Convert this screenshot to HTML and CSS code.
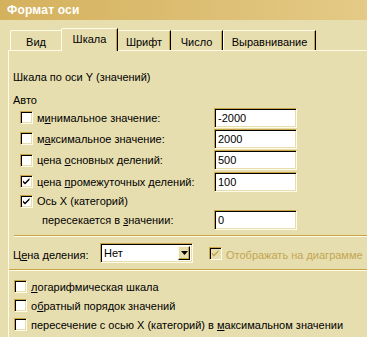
FILE: index.html
```html
<!DOCTYPE html>
<html lang="ru">
<head>
<meta charset="utf-8">
<title>Формат оси</title>
<link rel="stylesheet" href="styles.css">
</head>
<body>
<div class="dialog">
  <div class="titlebar">Формат оси</div>
  <div class="tabs">
    <div class="tab t-vid">Вид</div>
    <div class="tab t-scale active">Шкала</div>
    <div class="tab t-font">Шрифт</div>
    <div class="tab t-num">Число</div>
    <div class="tab t-align">Выравнивание</div>
  </div>
  <div class="panel">
    <div class="heading">Шкала по оси Y (значений)</div>
    <div class="auto">Авто</div>

    <div class="row r1">
      <div class="lbl"><span class="cb"></span><span>м<u>и</u>нимальное значение:</span></div>
      <div class="field">-2000</div>
    </div>
    <div class="row r2">
      <div class="lbl"><span class="cb"></span><span>м<u>а</u>ксимальное значение:</span></div>
      <div class="field">2000</div>
    </div>
    <div class="row r3">
      <div class="lbl"><span class="cb"></span><span>цена <u>о</u>сновных делений:</span></div>
      <div class="field">500</div>
    </div>
    <div class="row r4">
      <div class="lbl"><span class="cb checked"><svg viewBox="0 0 13 13" width="13" height="13"><path d="M3 5.5 L5 7.5 L9.5 3 L9.5 5 L5 9.5 L3 7.5 Z" fill="#000"/></svg></span><span>цена <u>п</u>ромежуточных делений:</span></div>
      <div class="field">100</div>
    </div>
    <div class="row r5">
      <div class="lbl"><span class="cb checked"><svg viewBox="0 0 13 13" width="13" height="13"><path d="M3 5.5 L5 7.5 L9.5 3 L9.5 5 L5 9.5 L3 7.5 Z" fill="#000"/></svg></span><span>Ось X (категорий)</span></div>
    </div>
    <div class="row r6">
      <div class="lbl indent"><span>пересекается в <u>з</u>начении:</span></div>
      <div class="field">0</div>
    </div>

    <div class="sep sep1"></div>

    <div class="row unit">
      <span class="unit-lbl">Ц<u>е</u>на деления:</span>
      <div class="combo"><span class="combo-val">Нет</span><span class="combo-btn"><svg viewBox="0 0 7 4" width="7" height="4"><path d="M0 0 H7 L3.5 4 Z" fill="#000"/></svg></span></div>
      <span class="cb disabled"><svg viewBox="0 0 13 13" width="13" height="13"><path d="M3 5.5 L5 7.5 L9.5 3 L9.5 5 L5 9.5 L3 7.5 Z" fill="#c2a653"/></svg></span>
      <span class="dis-text">Отображать на диаграмме</span>
    </div>

    <div class="sep sep2"></div>

    <div class="brow first"><span class="cb"></span><span><u>л</u>огарифмическая шкала</span></div>
    <div class="brow"><span class="cb"></span><span>о<u>б</u>ратный порядок значений</span></div>
    <div class="brow"><span class="cb"></span><span>пересечение с осью X (категорий) в <u>м</u>аксимальном значении</span></div>
  </div>
</div>
</body>
</html>
```
FILE: styles.css
```css
html, body {
  margin: 0;
  padding: 0;
}
body {
  background: #e7deaf;
  font-family: "Liberation Sans", Arial, sans-serif;
  font-size: 11px;
  color: #000;
  width: 367px;
  height: 337px;
  overflow: hidden;
  white-space: nowrap;
}
.dialog {
  display: flex;
  flex-direction: column;
}
.titlebar {
  height: 20px;
  line-height: 20px;
  padding-left: 7px;
  background: linear-gradient(to right, #d4b15d, #e4ca86);
  color: #fff;
  font-weight: bold;
  font-size: 12px;
  letter-spacing: 0.2px;
}
.tabs {
  display: flex;
  align-items: flex-end;
  height: 22px;
  margin-top: 8px;
  padding-left: 10px;
  position: relative;
  z-index: 1;
}
.tab {
  box-sizing: border-box;
  height: 20px;
  display: flex;
  align-items: center;
  justify-content: center;
  padding-top: 2px;
  border-top: 1px solid #fffbe6;
  border-left: 1px solid #fffbe6;
  border-right: 1px solid #000;
  box-shadow: inset -1px 0 0 #c9a445;
  border-top-left-radius: 2px;
  background: #e7deaf;
}
.t-vid { width: 51px; border-right: none; box-shadow: none; }
.t-scale { width: 57px; }
.t-font { width: 53px; border-left: none; }
.t-num { width: 52px; border-left: none; }
.t-align { width: 93px; }
.tab.active {
  height: 23px;
  margin-bottom: -1px;
  padding-top: 0;
  padding-bottom: 3px;
}
.panel {
  margin-left: 8px;
  border-left: 1px solid #fffbe6;
  border-top: 1px solid #fffbe6;
  height: 290px;
  display: flex;
  flex-direction: column;
}
.heading {
  margin-top: 20px;
  padding-left: 4px;
  line-height: 13px;
  height: 13px;
}
.auto {
  margin-top: 10px;
  padding-left: 4px;
  line-height: 13px;
  height: 13px;
}
.row {
  display: flex;
  align-items: center;
}
.r1 { height: 21px; }
.r2 { height: 21px; }
.r3 { height: 22px; }
.r4 { height: 21px; }
.r5 { height: 18px; }
.r6 { height: 20px; }
.lbl {
  box-sizing: border-box;
  width: 205px;
  padding-left: 11px;
  display: flex;
  align-items: center;
  gap: 4px;
}
.lbl.indent { padding-left: 33px; }
.cb {
  box-sizing: border-box;
  width: 13px;
  height: 13px;
  flex: none;
  background: #fff;
  border-top: 1px solid #c9a445;
  border-left: 1px solid #c9a445;
  border-bottom: 1px solid #fffbe6;
  border-right: 1px solid #fffbe6;
  box-shadow: inset 1px 1px 0 #000, inset -1px -1px 0 #e7deaf;
  position: relative;
}
.cb svg {
  position: absolute;
  left: -1px;
  top: -1px;
}
.field {
  box-sizing: border-box;
  width: 83px;
  height: 20px;
  background: #fff;
  border-top: 1px solid #c9a445;
  border-left: 1px solid #c9a445;
  border-bottom: 1px solid #fffbe6;
  border-right: 1px solid #fffbe6;
  box-shadow: inset 1px 1px 0 #000, inset -1px -1px 0 #e7deaf;
  padding-left: 3px;
  line-height: 18px;
}
.sep {
  height: 1px;
  background: #c9a445;
  border-bottom: 1px solid #fffbe6;
}
.sep1 { margin-top: 5px; margin-left: 5px; }
.sep2 { margin-top: 6px; }
.unit {
  margin-top: 6px;
  height: 20px;
  padding-left: 4px;
}
.unit-lbl {
  width: 87px;
  padding-top: 3px;
}
.combo {
  box-sizing: border-box;
  width: 93px;
  height: 20px;
  background: #fff;
  border-top: 1px solid #c9a445;
  border-left: 1px solid #c9a445;
  border-bottom: 1px solid #fffbe6;
  border-right: 1px solid #fffbe6;
  box-shadow: inset 1px 1px 0 #000, inset -1px -1px 0 #e7deaf;
  display: flex;
  align-items: stretch;
  padding: 2px;
}
.combo-val {
  flex: 1;
  padding-left: 1px;
  line-height: 14px;
}
.combo-btn {
  box-sizing: border-box;
  width: 12px;
  background: #e7deaf;
  border-top: 1px solid #fffbe6;
  border-left: 1px solid #fffbe6;
  border-right: 1px solid #000;
  border-bottom: 1px solid #000;
  box-shadow: inset -1px -1px 0 #c9a445;
  display: flex;
  align-items: center;
  justify-content: center;
}
.cb.disabled {
  margin-left: 16px;
  background: #e7deaf;
}
.dis-text {
  margin-left: 4px;
  color: #c2a653;
  padding-top: 3px;
}
.brow {
  display: flex;
  align-items: center;
  gap: 4px;
  height: 19px;
  padding-left: 5px;
}
.brow.first { margin-top: 6px; }
```
